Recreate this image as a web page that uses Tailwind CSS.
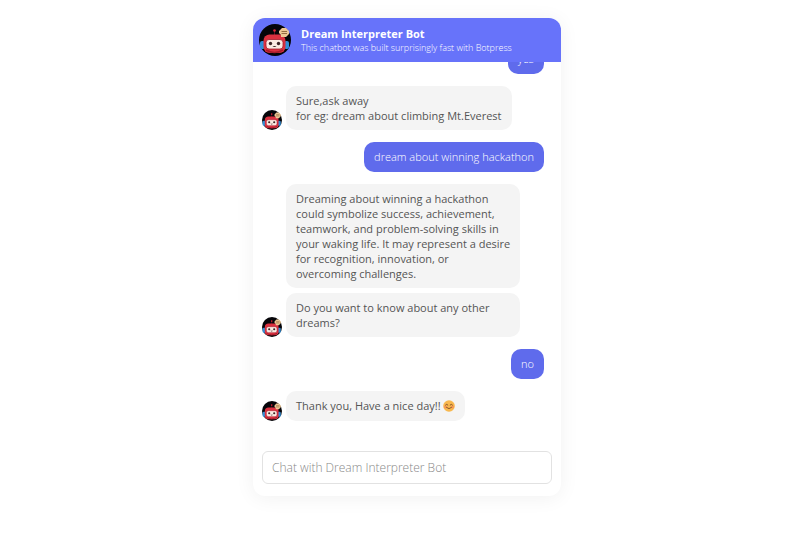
<!DOCTYPE html>
<html lang="en">
<head>
    <meta charset="UTF-8">
    <meta name="viewport" content="width=device-width, initial-scale=1.0">
    <title>Dream Interpreter Bot</title>
    <script src="https://cdn.jsdelivr.net/npm/@tailwindcss/browser@4"></script>
</head>
<body class="flex h-screen justify-center bg-white pt-[18px] pb-[41px] pl-2 font-['Open_Sans','Noto_Sans',sans-serif]">

    <!-- Bot avatar, reused in the header and beside messages -->
    <svg class="hidden" aria-hidden="true">
        <symbol id="bot" viewBox="0 0 32 32">
            <circle cx="16" cy="16" r="16" fill="#050509"/>
            <rect x="1" y="17" width="5" height="8" rx="2" fill="#2f8fd8"/>
            <rect x="25" y="17" width="5" height="8" rx="2" fill="#2f8fd8"/>
            <path d="M15.500 7v5" stroke="#5e0f1c" stroke-width="1"/>
            <circle cx="15.500" cy="6.500" r="1.300" fill="#df2438"/>
            <rect x="4.500" y="10.500" width="22" height="18.500" rx="6" fill="#dc3140"/>
            <path d="M7 26q8.500 5 17 0" fill="none" stroke="#a51d2c" stroke-width="1.500"/>
            <rect x="7" y="15.500" width="17" height="9.500" rx="3" fill="#fbeae2" stroke="#a51d2c" stroke-width=".8"/>
            <circle cx="11.500" cy="19.500" r="1.700" fill="#3b2225"/>
            <circle cx="19.500" cy="19.500" r="1.700" fill="#3b2225"/>
            <path d="M13.500 22q2 2 4 0z" fill="#3b2225"/>
            <path d="M23 4h4l3 3v3l-3 3h-2l-3 0v-2l-2-2V7z" fill="#eec795"/>
            <path d="M22.500 7.500h5.500M22.500 9.500h5.500" stroke="#8a6238" stroke-width=".9"/>
        </symbol>
    </svg>

    <div class="flex h-full w-full max-w-[308px] flex-col overflow-hidden rounded-xl bg-white shadow-[0_2px_20px_rgba(0,0,0,0.06)]">
        <header class="flex shrink-0 items-center gap-[10px] bg-[#6773fa] p-[6px]">
            <svg class="size-8 shrink-0" role="img" aria-label="Bot"><use href="#bot"/></svg>
            <div>
                <h1 class="text-[11px] leading-4 font-bold text-white">Dream Interpreter Bot</h1>
                <p class="text-[9px] leading-3 font-light text-white">This chatbot was built surprisingly fast with Botpress</p>
            </div>
        </header>

        <main class="flex min-h-0 flex-1 flex-col justify-end gap-3 overflow-hidden pr-[17px] pl-[9px] text-[11px] leading-[15px] text-[#555]">
            <p class="shrink-0 self-end rounded-[10px] bg-[#5f6bec] px-[10px] py-[7px] leading-4 font-light text-white">yes</p>

            <div class="flex shrink-0 items-end gap-1">
                <svg class="size-5 shrink-0" role="img" aria-label="Bot"><use href="#bot"/></svg>
                <p class="rounded-[10px] bg-[#f4f4f4] px-[10px] py-[7px]">Sure,ask away<br>for eg: dream about climbing Mt.Everest</p>
            </div>

            <p class="shrink-0 self-end rounded-[10px] bg-[#5f6bec] px-[10px] py-[7px] leading-4 font-light text-white">dream about winning hackathon</p>

            <div class="flex shrink-0 items-end gap-1">
                <svg class="size-5 shrink-0" role="img" aria-label="Bot"><use href="#bot"/></svg>
                <div class="flex max-w-[234px] flex-col gap-[5px]">
                    <p class="rounded-[10px] bg-[#f4f4f4] py-[7px] pr-2 pl-[10px]">Dreaming about winning a hackathon could symbolize success, achievement, teamwork, and problem-solving skills in your waking life. It may represent a desire for recognition, innovation, or<br>overcoming challenges.</p>
                    <p class="rounded-[10px] bg-[#f4f4f4] px-[10px] py-[7px]">Do you want to know about any other dreams?</p>
                </div>
            </div>

            <p class="shrink-0 self-end rounded-[10px] bg-[#5f6bec] px-[10px] py-[7px] leading-4 font-light text-white">no</p>

            <div class="flex shrink-0 items-end gap-1">
                <svg class="size-5 shrink-0" role="img" aria-label="Bot"><use href="#bot"/></svg>
                <p class="flex items-center gap-[2px] rounded-[10px] bg-[#f4f4f4] px-[10px] py-[7px] leading-4">
                    Thank you, Have a nice day!!
                    <svg class="size-3" viewBox="0 0 12 12" fill="none" role="img" aria-label="Smiling face">
                        <circle cx="6" cy="6" r="5.800" fill="#f8b84e"/>
                        <circle cx="2.500" cy="7" r="1.400" fill="#f59455"/>
                        <circle cx="9.500" cy="7" r="1.400" fill="#f59455"/>
                        <path d="M2.500 5q1.200-1.600 2.400 0M7.100 5q1.200-1.600 2.400 0M3.500 7.500q2.500 2.500 5 0" stroke="#7a4a25" stroke-width=".9" stroke-linecap="round"/>
                    </svg>
                </p>
            </div>
        </main>

        <form class="shrink-0 px-[9px] pt-[30px] pb-3">
            <input
                type="text"
                id="message"
                name="message"
                aria-label="Message"
                placeholder="Chat with Dream Interpreter Bot"
                class="block h-[33px] w-full rounded-md border border-[#e2e2e2] px-[9px] text-[12px] font-light text-[#555] placeholder:text-[#888] focus:outline-none"
            >
        </form>
    </div>
</body>
</html>
